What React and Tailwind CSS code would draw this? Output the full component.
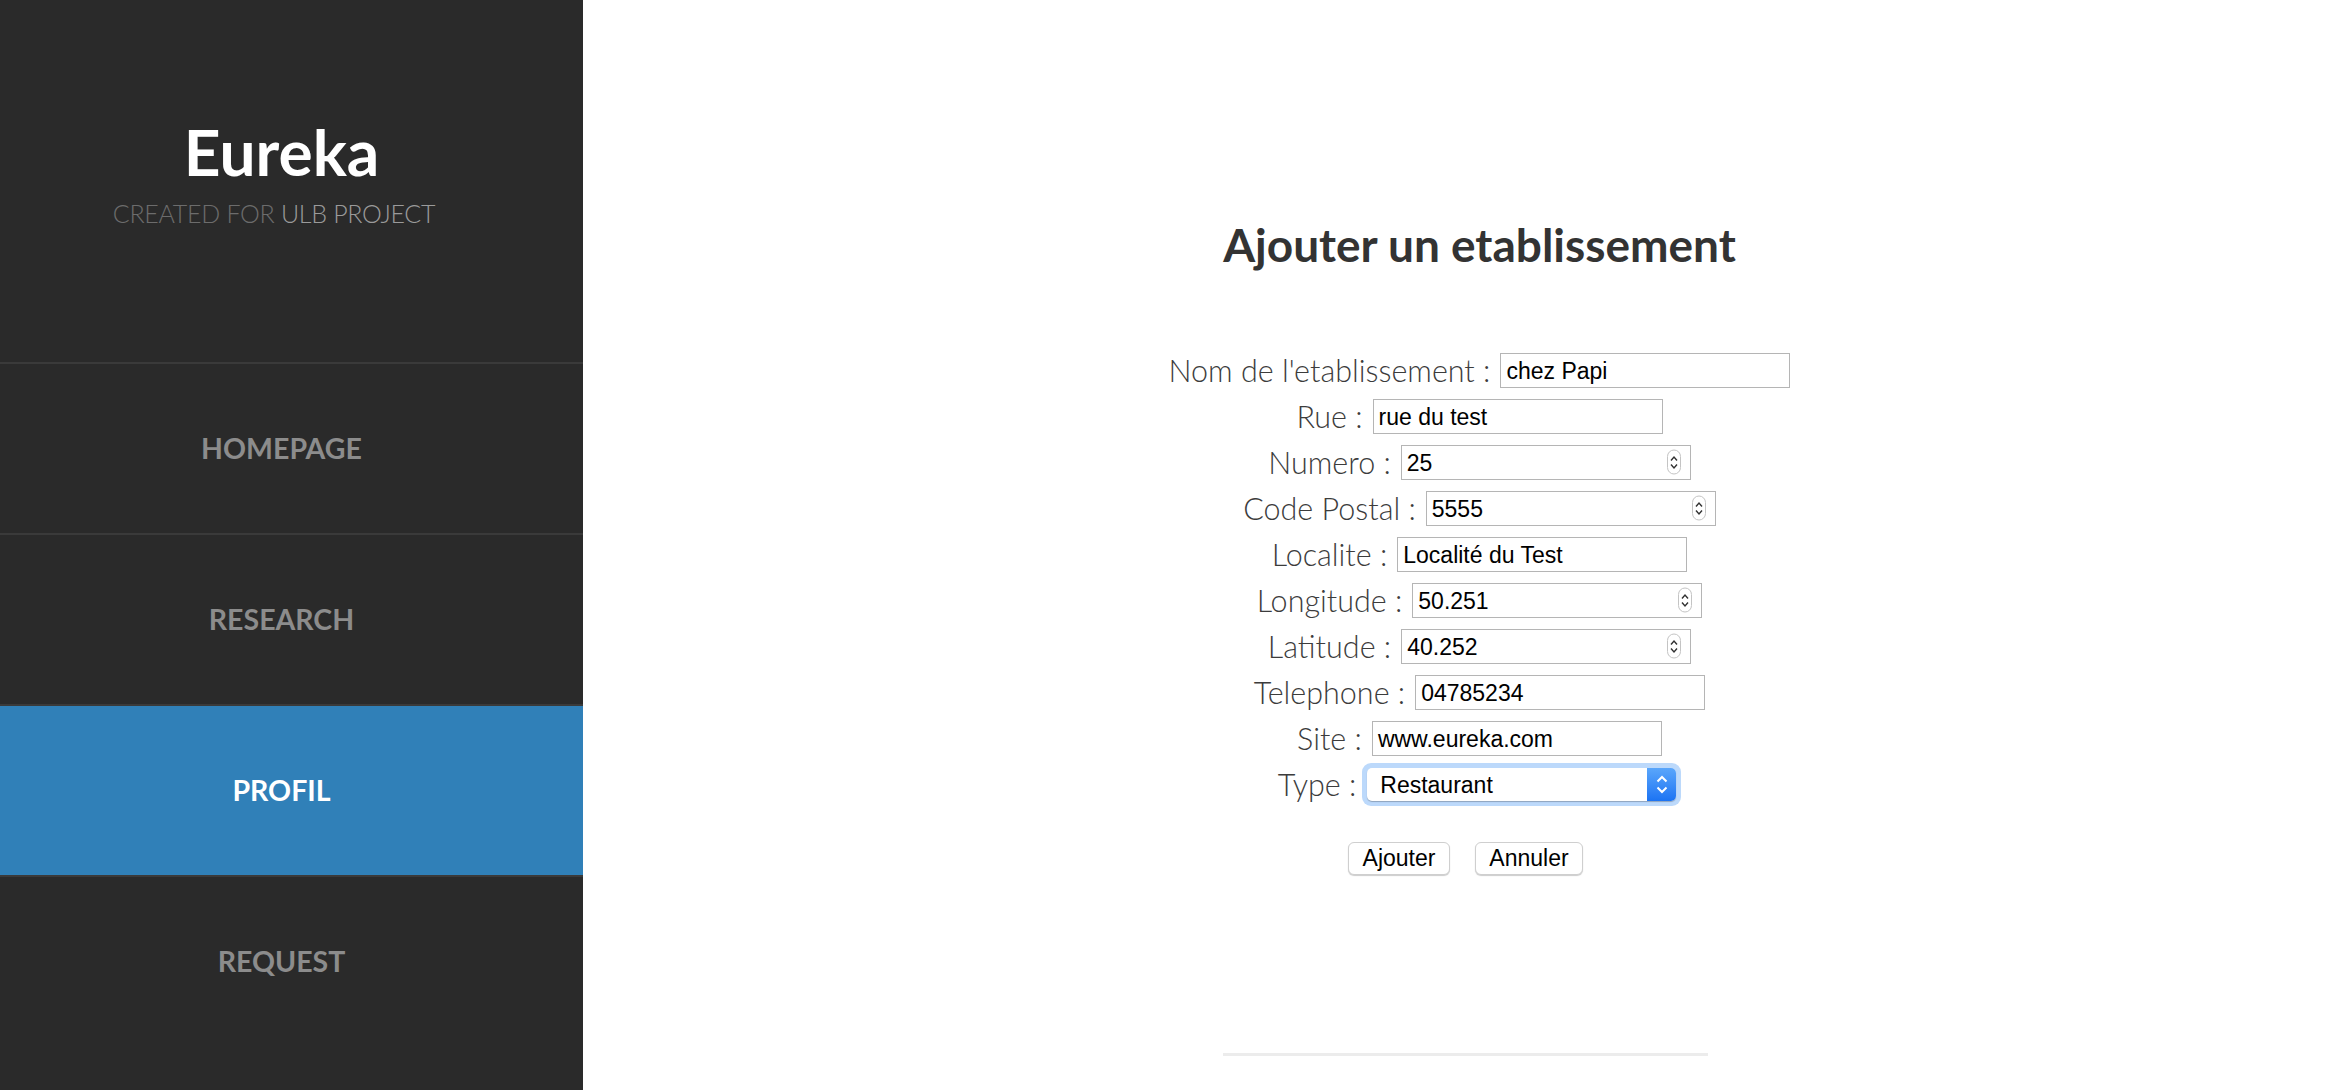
import React from "react";

const SANS = "font-['Source_Sans_Pro','Lato','Open_Sans',sans-serif]";

function Spinner() {
  return (
    <span className="absolute right-[9px] top-1/2 -translate-y-1/2 w-[14px] h-[25px] rounded-full border border-[#c4c4c4] bg-white flex flex-col items-center justify-center gap-[2px]">
      <svg width="8" height="6" viewBox="0 0 8 6"><path d="M1 5 L4 1.5 L7 5" fill="none" stroke="#333" strokeWidth="1.4" /></svg>
      <svg width="8" height="6" viewBox="0 0 8 6"><path d="M1 1 L4 4.5 L7 1" fill="none" stroke="#333" strokeWidth="1.4" /></svg>
    </span>
  );
}

function Field({ label, value, number }) {
  return (
    <div className="flex items-center justify-center h-[46px] gap-[10px]">
      <span className={`${SANS} font-light text-[30.5px] text-[#3c3c3c] leading-none`}>{label} :</span>
      <div className="relative w-[290px] h-[35px] border border-[#b5b5b5] bg-white flex items-center">
        <span className="font-['Liberation_Sans',Arial,sans-serif] text-[23px] text-black pl-[5px] pt-[3px] leading-none">{value}</span>
        {number && <Spinner />}
      </div>
    </div>
  );
}

export default function App() {
  const nav = [
    { t: "HOMEPAGE", active: false },
    { t: "RESEARCH", active: false },
    { t: "PROFIL", active: true },
    { t: "REQUEST", active: false },
  ];
  return (
    <div className="flex w-full h-[1090px] bg-white overflow-hidden">
      <aside className="w-[583px] shrink-0 bg-[#2a2a2a] flex flex-col">
        <div className="h-[362px] flex flex-col items-center pt-[116px] pr-[20px]">
          <div className={`${SANS} font-bold text-[64px] leading-[72px] text-white`}>Eureka</div>
          <div className={`${SANS} font-light text-[25px] leading-[30px] mt-[10px] mr-[15px] tracking-[-0.3px]`}>
            <span className="text-[#6c6c6c]">CREATED FOR </span>
            <span className="text-[#9a9a9a]">ULB PROJECT</span>
          </div>
        </div>
        {nav.map((n) => (
          <div
            key={n.t}
            className={`h-[171px] border-t-2 border-[#3a3a3a] flex items-center justify-center pr-[20px] ${n.active ? "bg-[#3080b8]" : ""}`}
          >
            <span className={`${SANS} font-bold text-[28.5px] ${n.active ? "text-white" : "text-[#8c8c8c]"}`}>{n.t}</span>
          </div>
        ))}
      </aside>
      <main className="flex-1 flex flex-col items-center">
        <div className="flex flex-col items-center pl-[28px] pt-[215px]">
          <h1 className={`${SANS} font-bold text-[46px] leading-[60px] text-[#333]`}>Ajouter un etablissement</h1>
          <div className="mt-[72px] flex flex-col items-center">
            <Field label="Nom de l'etablissement" value="chez Papi" />
            <Field label="Rue" value="rue du test" />
            <Field label="Numero" value="25" number />
            <Field label="Code Postal" value="5555" number />
            <Field label="Localite" value="Localité du Test" />
            <Field label="Longitude" value="50.251" number />
            <Field label="Latitude" value="40.252" number />
            <Field label="Telephone" value="04785234" />
            <Field label="Site" value="www.eureka.com" />
            <div className="flex items-center justify-center h-[46px] gap-[6px]">
              <span className={`${SANS} font-light text-[30.5px] text-[#3c3c3c] leading-none`}>Type :</span>
              <div className="p-[5px] rounded-[9px] bg-[#bcd9fb]">
                <div className="relative w-[309px] h-[33px] rounded-[5px] bg-white shadow-[0_1px_1px_rgba(0,0,0,0.25)] flex items-center overflow-hidden">
                  <span className="font-['Liberation_Sans',Arial,sans-serif] text-[23px] text-black pl-[13px] pt-[2px] leading-none">Restaurant</span>
                  <span className="absolute right-0 top-0 bottom-0 w-[29px] bg-gradient-to-b from-[#5aa6fb] to-[#1b73f3] flex flex-col items-center justify-center gap-[3px]">
                    <svg width="12" height="8" viewBox="0 0 12 8"><path d="M1.5 6.5 L6 2 L10.5 6.5" fill="none" stroke="white" strokeWidth="2" /></svg>
                    <svg width="12" height="8" viewBox="0 0 12 8"><path d="M1.5 1.5 L6 6 L10.5 1.5" fill="none" stroke="white" strokeWidth="2" /></svg>
                  </span>
                </div>
              </div>
            </div>
          </div>
        </div>
        <div className="flex gap-[25px] mt-[35px]">
          <button className="w-[102px] h-[33px] rounded-[6px] border border-[#cfcfcf] bg-white shadow-[0_1px_1px_rgba(0,0,0,0.2)] font-['Liberation_Sans',Arial,sans-serif] text-[23px] text-black leading-none">Ajouter</button>
          <button className="w-[108px] h-[33px] rounded-[6px] border border-[#cfcfcf] bg-white shadow-[0_1px_1px_rgba(0,0,0,0.2)] font-['Liberation_Sans',Arial,sans-serif] text-[23px] text-black leading-none">Annuler</button>
        </div>
        <div className="mt-[178px] w-[485px] h-[3px] bg-[#ececec]" />
      </main>
    </div>
  );
}
